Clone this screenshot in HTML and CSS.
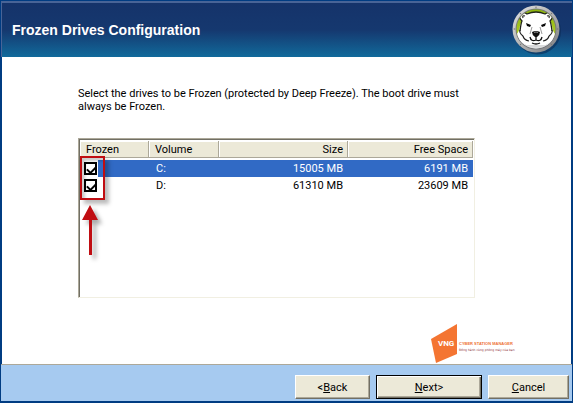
FILE: index.html
```html
<!DOCTYPE html>
<html lang="en">
<head>
<meta charset="utf-8">
<title>Frozen Drives Configuration</title>
<link rel="stylesheet" href="styles.css">
</head>
<body>
<div class="wizard">
  <header class="banner">
    <h1>Frozen Drives Configuration</h1>
    <svg class="bear" viewBox="0 0 50 50" aria-hidden="true">
      <defs>
        <linearGradient id="ring" x1="0" y1="0" x2="1" y2="1">
          <stop offset="0" stop-color="#e4e4e4"/>
          <stop offset=".5" stop-color="#b4b4b4"/>
          <stop offset="1" stop-color="#77787c"/>
        </linearGradient>
        <linearGradient id="lime" x1="0" y1="0" x2="0" y2="1">
          <stop offset="0" stop-color="#8db60c"/>
          <stop offset=".6" stop-color="#a9c824"/>
          <stop offset=".75" stop-color="#f0f0ee"/>
          <stop offset="1" stop-color="#cfcfd1"/>
        </linearGradient>
        <clipPath id="disc"><circle cx="24" cy="24" r="19.5"/></clipPath>
      </defs>
      <circle cx="25.5" cy="26" r="23.5" fill="#0b2c55" opacity=".6"/>
      <circle cx="24" cy="24" r="23.5" fill="url(#ring)"/>
      <circle cx="24" cy="24" r="20.5" fill="#75777a"/>
      <circle cx="24" cy="24" r="19.5" fill="url(#lime)"/>
      <g fill="#777"><circle cx="24" cy="2.300" r=".7"/><circle cx="8.500" cy="8.500" r=".7"/><circle cx="39.500" cy="8.500" r=".7"/><circle cx="2.300" cy="24" r=".7"/><circle cx="45.700" cy="24" r=".7"/><circle cx="8.500" cy="39.500" r=".7"/><circle cx="39.500" cy="39.500" r=".7"/></g>
      <g clip-path="url(#disc)">
        <path d="M3 31 Q7 28 8 21 Q9 17 10 16 Q6 12 8 9 Q11 6 15 9 Q24 5 33 9 Q37 6 40 9 Q42 12 38 16 Q39 17 40 21 Q41 28 45 31 V40 H3Z" fill="#fff"/>
        <path d="M8 26 Q9 18 10 16 Q6 12 8 9 Q11 6 15 9 Q24 5 33 9 Q37 6 40 9 Q42 12 38 16 Q39 18 40 26" fill="none" stroke="#20231a" stroke-width="1.300"/>
        <path d="M3 32 Q14 42 24 42 Q34 42 45 32 V48 H3Z" fill="#dedfe0"/>
      </g>
      <path d="M8 25 Q7 28 11 31 M40 25 Q41 28 37 31 M11 31 Q12 35 17 36 M37 31 Q36 35 31 36" fill="none" stroke="#222" stroke-width="1.200"/>
      <path d="M11 13 Q10 10 13 11 M37 13 Q38 10 35 11" fill="none" stroke="#222" stroke-width="1.200"/>
      <path d="M14 18 L19 20 L18 22 L15 21Z M34 18 L29 20 L30 22 L33 21Z" fill="#080808"/>
      <path d="M20 22 L18 29 M28 22 L30 29" stroke="#999" stroke-width="1"/>
      <path d="M20 27 Q24 25 28 27 Q28 30 25 32 H23 Q20 30 20 27Z" fill="#111"/>
      <path d="M22 27.500 Q24 26.500 26 27.500" stroke="#888" fill="none"/>
      <path d="M24 32 V35 M18 32 Q19 37 24 35 Q29 37 30 32 M20 38 Q24 40 28 38" fill="none" stroke="#111" stroke-width="1.300"/>
    </svg>
  </header>

  <main class="page">
    <p class="intro">Select the drives to be Frozen (protected by Deep Freeze). The boot drive must always be Frozen.</p>
    <div class="list">
      <table>
        <colgroup><col class="c-frozen"><col class="c-volume"><col class="c-size"><col></colgroup>
        <thead>
          <tr><th>Frozen</th><th>Volume</th><th class="num">Size</th><th class="num">Free Space</th></tr>
        </thead>
        <tbody>
          <tr class="selected"><td class="tick"><input type="checkbox" aria-label="Freeze drive C:" checked></td><td>C:</td><td class="num">15005 MB</td><td class="num">6191 MB</td></tr>
          <tr><td class="tick"><input type="checkbox" aria-label="Freeze drive D:" checked></td><td>D:</td><td class="num">61310 MB</td><td class="num">23609 MB</td></tr>
        </tbody>
      </table>
      <div class="mark"></div>
      <svg class="arrow" viewBox="0 0 24 56" aria-hidden="true">
        <path d="M11 0 L19 15 H13 V50 H10 V15 H3Z" fill="#c00d12"/>
      </svg>
    </div>
    <svg class="vendor" viewBox="0 0 96 40" role="img" aria-label="VNG Cyber Station Manager">
      <path d="M0 15 L26 0 V30 L5 39Z" fill="#f47532"/>
      <text x="7" y="22" class="v-mark">VNG</text>
      <text x="28" y="21" class="v-name">CYBER STATION MANAGER</text>
      <text x="28" y="27" class="v-tag">Đồng hành cùng phòng máy của bạn</text>
    </svg>
  </main>

  <footer class="actions">
    <button type="button" class="back">&lt;<u>B</u>ack</button>
    <button type="button" class="next"><u>N</u>ext&gt;</button>
    <button type="button" class="cancel"><u>C</u>ancel</button>
  </footer>
</div>
</body>
</html>
```
FILE: styles.css
```css
* { box-sizing: border-box; }

body {
  margin: 0;
  font: 11px/13px Roboto, Arial, sans-serif;
  color: #000;
}

.wizard {
  display: flex;
  flex-direction: column;
  min-height: 100vh;
  border: 1px solid #003c82;
  border-bottom-width: 2px;
  background: #003c82;
}

.banner {
  display: flex;
  align-items: center;
  justify-content: space-between;
  height: 56px;
  padding: 0 10px;
  border-top: 2px solid #486497;
  border-left: 1px solid #486497;
  background: linear-gradient(#15336a, #15386f 50%, #116a9b);
}

h1 {
  margin: 0;
  font: bold 14px/18px "Liberation Sans", Arial, sans-serif;
  color: #fff;
}

.bear { width: 50px; height: 50px; }

.page {
  position: relative;
  flex: 1;
  margin: 0 1px;
  padding: 30px 96px 0 76px;
  background: #fff;
}

.intro { margin: 0; max-width: 390px; }

.list {
  position: relative;
  height: 160px;
  margin-top: 25px;
  border: 1px solid;
  border-color: #aca899 #f1efe2 #f1efe2 #aca899;
  box-shadow: inset 1px 1px #716f64;
  padding: 2px 1px 1px;
}

table {
  width: 100%;
  table-layout: fixed;
  border-collapse: separate;
  border-spacing: 0;
}

.c-frozen { width: 69px; }
.c-volume { width: 70px; }
.c-size { width: 129px; }

th, td {
  height: 17px;
  padding: 0 5px 0 7px;
  text-align: left;
  font-weight: normal;
  white-space: nowrap;
}

th {
  padding: 0 4px 0 6px;
  background: #ece9d8;
  border-right: 1px solid #aca899;
  border-bottom: 1px solid #aca899;
  box-shadow: inset 1px 1px #fff;
}

.num { text-align: right; }

tbody::before {
  content: "";
  display: block;
  height: 2px;
}

.selected td { background: #316ac5; color: #fff; }
.selected .tick { background: linear-gradient(90deg, #fff 18px, #316ac5 18px); }
.tick { padding: 0 4px; }

input {
  appearance: none;
  display: block;
  width: 13px;
  height: 13px;
  margin: 0;
  border: 2px solid #000;
  background: #fff;
}

input:checked::after {
  content: "";
  display: block;
  width: 7px;
  height: 4px;
  margin: 2px 1px;
  border: solid #000;
  border-width: 0 0 2px 2px;
  transform: rotate(-45deg);
}

.mark {
  position: absolute;
  top: 17px;
  left: 1px;
  width: 25px;
  height: 44px;
  border: 2px solid #c00d12;
  box-shadow: 4px 4px 4px #0004, inset 3px 3px 3px #0003;
}

.arrow {
  position: absolute;
  top: 66px;
  left: 0;
  width: 24px;
  height: 56px;
  filter: drop-shadow(4px 4px 2px #0005);
}

.vendor {
  position: absolute;
  right: 44px;
  bottom: 0;
  width: 96px;
  height: 40px;
}

.v-mark { font: bold 8px Roboto, sans-serif; fill: #fff; }
.v-name { font: bold 4px "Liberation Sans", sans-serif; fill: #ee7337; }
.v-tag { font: 3px "DejaVu Sans", sans-serif; fill: #8c3038; }

.actions {
  display: flex;
  justify-content: flex-end;
  height: 37px;
  padding: 10px 3px 3px;
  border-top: 1px solid #aca899;
  background: #a6caf0;
}

button {
  width: 75px;
  height: 24px;
  padding: 0;
  border: 1px solid;
  border-color: #fff #716f64 #716f64 #fff;
  border-radius: 0;
  box-shadow: inset -1px -1px #aca899;
  background: #ece9d8;
  color: #000;
  font: inherit;
}

.next {
  width: 106px;
  margin: 0 6px;
  border-color: #000;
  box-shadow: inset 1px 1px #fff, inset -1px -1px #716f64, inset -2px -2px #aca899;
}

.cancel { width: 81px; }
```
